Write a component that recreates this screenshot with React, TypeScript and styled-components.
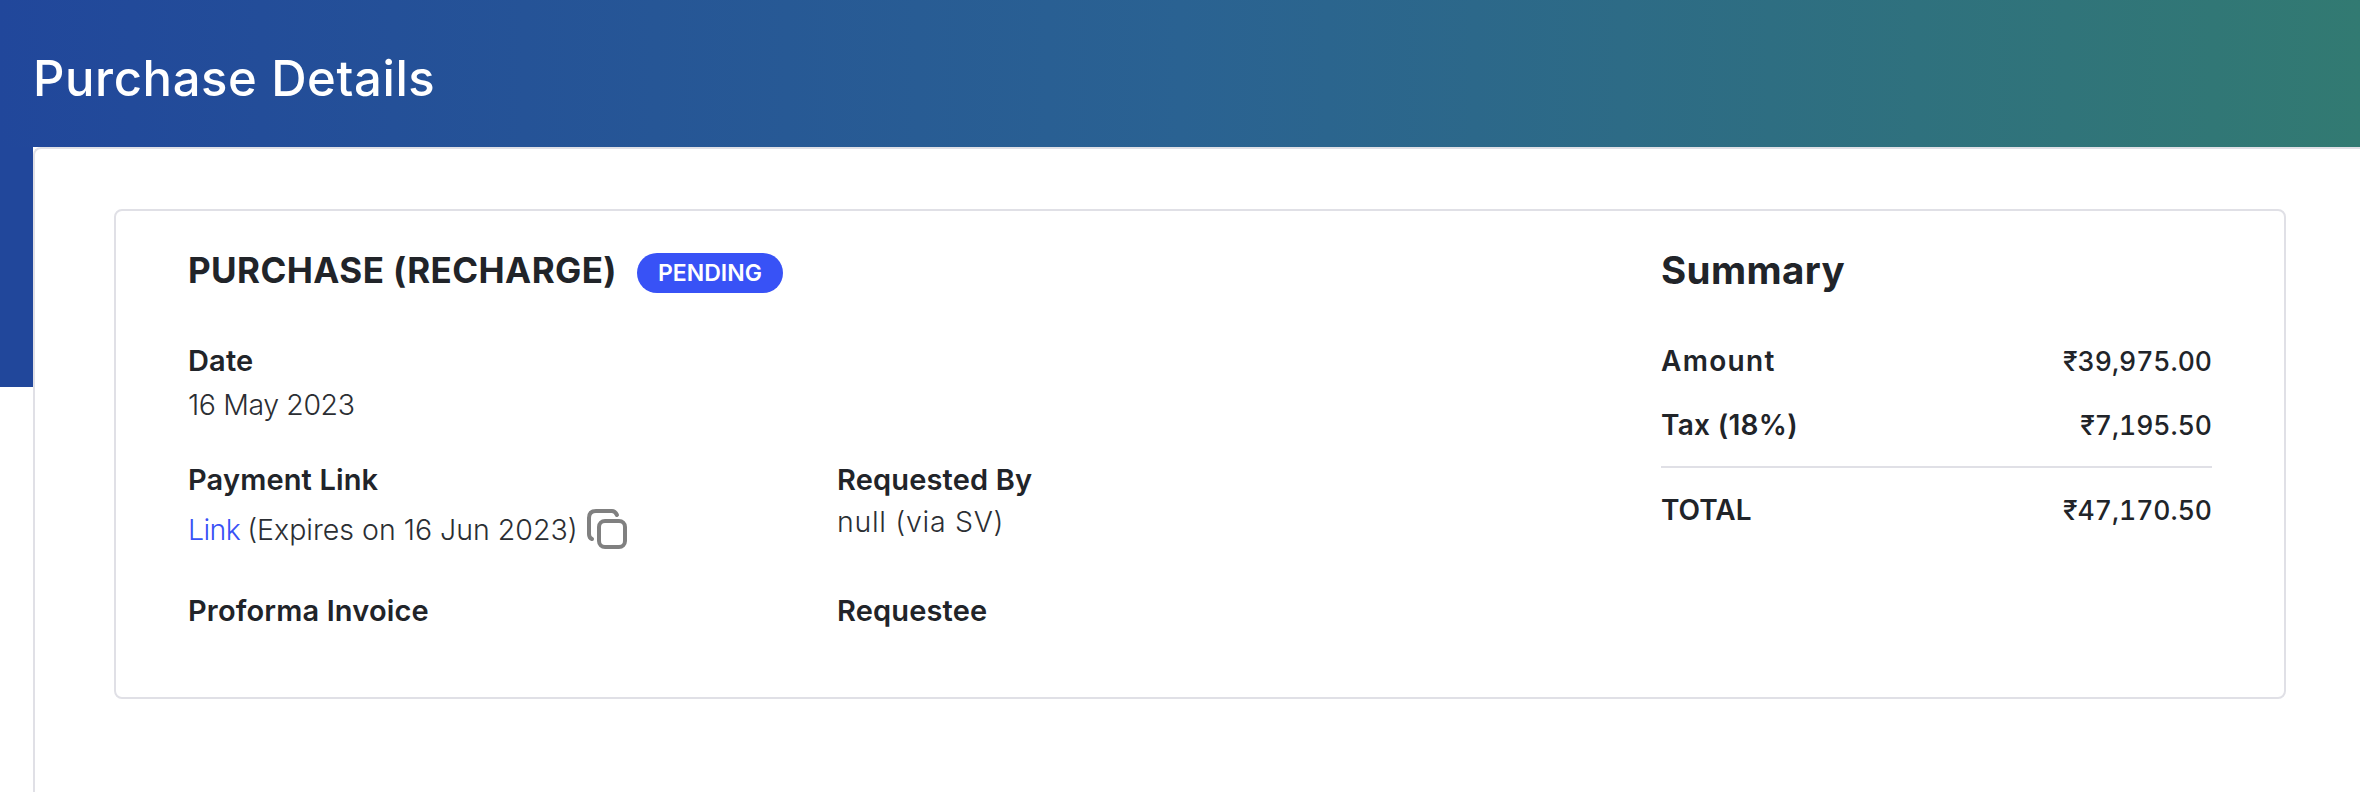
import React from 'react';
import styled, { createGlobalStyle } from 'styled-components';

const GlobalStyle = createGlobalStyle`
  html, body {
    margin: 0;
    padding: 0;
    background: #fff;
  }
  body {
    font-family: Inter, "Noto Sans", sans-serif;
    color: #212429;
  }
`;

const Page = styled.div`
  width: 2360px;
  height: 792px;
  overflow: hidden;
  display: flex;
  flex-direction: column;
  background:
    linear-gradient(90deg, #21479b 0%, #2a6292 50%, #327a72 100%) top left / 100% 147px no-repeat,
    linear-gradient(#21479b, #21479b) top left / 33px 387px no-repeat,
    #fff;
`;

const Header = styled.header`
  height: 147px;
  flex: none;
  display: flex;
  align-items: center;
  padding: 10px 0 0 33px;
  box-sizing: border-box;
`;

const PageTitle = styled.h1`
  margin: 0;
  font-size: 49px;
  font-weight: 500;
  letter-spacing: 0.6px;
  color: #fff;
`;

const Sheet = styled.main`
  flex: 1;
  margin-left: 33px;
  padding: 60px 74px 0 79px;
  background: #fff;
  border: solid #e0e0e6;
  border-width: 2px 0 0 2px;
  border-top-left-radius: 8px;
`;

const Panel = styled.section`
  box-sizing: border-box;
  width: 2172px;
  height: 490px;
  display: flex;
  padding: 35px 72px 0 72px;
  border: 2px solid #e0e0e6;
  border-radius: 8px;
`;

const Details = styled.div`
  width: 1473px;
  flex: none;
`;

const TitleRow = styled.div`
  display: flex;
  align-items: center;
  gap: 20px;
  height: 48px;
`;

const SectionTitle = styled.h2`
  margin: 0;
  font-size: 35px;
  line-height: 48px;
  font-weight: 700;
  letter-spacing: 0.4px;
`;

const SummaryTitle = styled(SectionTitle)`
  font-size: 38.5px;
`;

const Badge = styled.span`
  display: flex;
  align-items: center;
  justify-content: center;
  width: 146px;
  height: 40px;
  margin-top: 6px;
  border-radius: 20px;
  background: #3852f6;
  color: #fff;
  font-size: 23px;
  font-weight: 600;
`;

const FieldGrid = styled.div`
  display: grid;
  grid-template-columns: 649px 1fr;
  grid-template-rows: 119px 131px auto;
  margin-top: 47px;
`;

const Field = styled.div<{ $wide?: boolean }>`
  grid-column: ${(p) => (p.$wide ? '1 / -1' : 'auto')};
`;

const Label = styled.div`
  font-size: 29px;
  line-height: 40px;
  font-weight: 600;
  letter-spacing: 0.15px;
`;

const Value = styled.div<{ $gap?: number; $track?: number }>`
  display: flex;
  align-items: center;
  gap: 8px;
  margin-top: ${(p) => p.$gap ?? 4}px;
  font-size: 28.5px;
  line-height: 40px;
  font-weight: 300;
  letter-spacing: ${(p) => p.$track ?? 0}px;
  color: #2b2e33;
`;

const PayLink = styled.a`
  color: #3852f6;
  text-decoration: none;
  letter-spacing: -0.6px;
  margin-right: -1px;
`;

const Summary = styled.aside`
  flex: 1;
`;

const SummaryRow = styled.div<{ $spaced?: number }>`
  display: flex;
  justify-content: space-between;
  margin-top: ${(p) => p.$spaced ?? 0}px;
  line-height: 40px;
`;

const SummaryName = styled.span<{ $track?: number }>`
  font-size: 28px;
  font-weight: 600;
  letter-spacing: ${(p) => p.$track ?? 0}px;
`;

const SummaryAmount = styled.span`
  font-size: 26.5px;
  font-weight: 500;
  font-variant-numeric: tabular-nums;
`;

const Divider = styled.hr`
  margin: 21px 0 22px;
  border: 0;
  border-top: 2px solid #e0e0e6;
`;

const CopyIcon = () => (
  <svg width="44" height="42" viewBox="0 0 44 42" fill="none" stroke="#808080" strokeWidth="4" strokeLinecap="round">
    <rect x="13" y="12" width="26" height="26" rx="6" />
    <path d="M6 30 Q3 29 3 25 V9 Q3 2 10 2 H26 Q29 2 31 6" />
  </svg>
);

export default function App() {
  return (
    <Page>
      <GlobalStyle />
      <Header>
        <PageTitle>Purchase Details</PageTitle>
      </Header>
      <Sheet>
        <Panel>
          <Details>
            <TitleRow>
              <SectionTitle>PURCHASE (RECHARGE)</SectionTitle>
              <Badge>PENDING</Badge>
            </TitleRow>
            <FieldGrid>
              <Field $wide>
                <Label>Date</Label>
                <Value $track={-0.4}>16 May 2023</Value>
              </Field>
              <Field>
                <Label>Payment Link</Label>
                <Value $gap={9}>
                  <span>
                    <PayLink href="#">Link</PayLink> (Expires on 16 Jun 2023)
                  </span>
                  <CopyIcon />
                </Value>
              </Field>
              <Field>
                <Label>Requested By</Label>
                <Value $gap={2} $track={0.7}>null (via SV)</Value>
              </Field>
              <Field>
                <Label>Proforma Invoice</Label>
              </Field>
              <Field>
                <Label>Requestee</Label>
              </Field>
            </FieldGrid>
          </Details>
          <Summary>
            <SummaryTitle>Summary</SummaryTitle>
            <SummaryRow $spaced={47}>
              <SummaryName $track={1.3}>Amount</SummaryName>
              <SummaryAmount>₹39,975.00</SummaryAmount>
            </SummaryRow>
            <SummaryRow $spaced={24}>
              <SummaryName $track={0.3}>Tax (18%)</SummaryName>
              <SummaryAmount>₹7,195.50</SummaryAmount>
            </SummaryRow>
            <Divider />
            <SummaryRow>
              <SummaryName>TOTAL</SummaryName>
              <SummaryAmount>₹47,170.50</SummaryAmount>
            </SummaryRow>
          </Summary>
        </Panel>
      </Sheet>
    </Page>
  );
}
